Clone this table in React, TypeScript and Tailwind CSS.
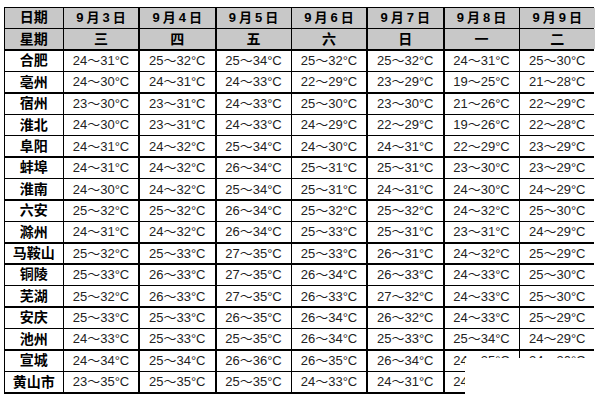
import React from 'react';

const days = ['9月3日', '9月4日', '9月5日', '9月6日', '9月7日', '9月8日', '9月9日'];
const weeks = ['三', '四', '五', '六', '日', '一', '二'];

const rows: [string, string[]][] = [
  ['合肥', ['24～31', '25～32', '25～34', '25～32', '25～32', '24～31', '25～30']],
  ['亳州', ['24～30', '24～31', '24～33', '22～29', '23～29', '19～25', '21～28']],
  ['宿州', ['23～30', '23～31', '24～33', '25～30', '23～30', '21～26', '22～29']],
  ['淮北', ['24～30', '23～31', '24～33', '24～29', '22～29', '19～26', '22～28']],
  ['阜阳', ['24～31', '24～32', '25～34', '24～30', '24～31', '22～29', '23～29']],
  ['蚌埠', ['24～31', '24～32', '26～34', '25～31', '25～31', '23～30', '23～29']],
  ['淮南', ['24～30', '24～32', '25～34', '25～31', '24～31', '24～30', '24～29']],
  ['六安', ['25～32', '25～32', '26～34', '25～32', '25～32', '24～32', '25～30']],
  ['滁州', ['24～31', '24～32', '26～34', '25～33', '25～31', '23～31', '24～29']],
  ['马鞍山', ['25～32', '25～33', '27～35', '25～33', '26～31', '24～32', '25～29']],
  ['铜陵', ['25～33', '26～33', '27～35', '26～34', '26～33', '24～33', '25～30']],
  ['芜湖', ['25～32', '26～33', '27～35', '26～33', '27～32', '24～33', '25～30']],
  ['安庆', ['25～33', '25～33', '26～35', '26～34', '26～32', '24～33', '25～29']],
  ['池州', ['24～33', '25～33', '25～35', '26～34', '25～33', '25～34', '24～29']],
  ['宣城', ['24～34', '25～34', '26～36', '26～35', '26～34', '24～35', '24～30']],
  ['黄山市', ['23～35', '25～35', '25～35', '24～33', '24～31', '24～33', '24～30']],
];

const font = { fontFamily: '"Liberation Sans", "Noto Sans CJK SC", sans-serif' };

export default function App() {
  return (
    <div className="relative w-[599px] h-[402px] bg-white overflow-hidden" style={font}>
      <div className="absolute left-[3.5px] top-[6.5px] w-[590px] h-[387px] bg-black p-[1.5px]">
        <div className="grid h-full grid-cols-[57.5px_74px_75.5px_74px_74px_75.5px_74px_74.5px] grid-rows-[repeat(18,minmax(0,1fr))] gap-[1.5px]">
          <div className="bg-[#c8c8c8] flex items-center justify-center text-[14px] font-bold text-black">日期</div>
          {days.map((d) => (
            <div key={d} className="bg-[#c8c8c8] flex items-center justify-center text-[13px] font-bold tracking-[3px] pl-[3px] text-black">
              {d}
            </div>
          ))}
          <div className="bg-[#c8c8c8] flex items-center justify-center text-[14px] font-bold text-black">星期</div>
          {weeks.map((w) => (
            <div key={w} className="bg-[#c8c8c8] flex items-center justify-center text-[14px] font-bold text-black">
              {w}
            </div>
          ))}
          {rows.map(([city, temps]) => (
            <React.Fragment key={city}>
              <div className="bg-white flex items-center justify-center text-[14px] font-bold text-black">{city}</div>
              {temps.map((t, i) => (
                <div key={i} className="bg-white flex items-center justify-center text-[13px] text-[#222]">
                  {t}°C
                </div>
              ))}
            </React.Fragment>
          ))}
        </div>
      </div>
      {/* white patch over the lower right corner */}
      <div className="absolute left-[465px] top-[358px] w-[134px] h-[44px] bg-white" />
    </div>
  );
}
